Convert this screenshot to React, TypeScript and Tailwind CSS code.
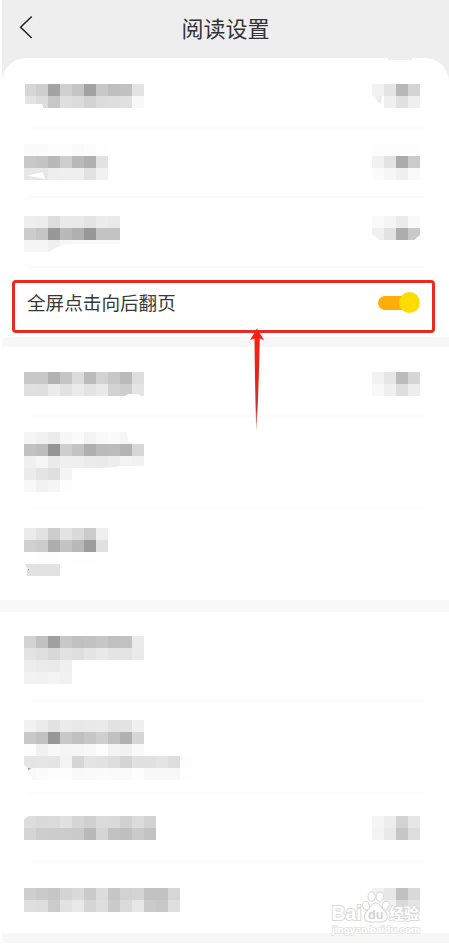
import type { ReactNode } from "react";

const CJK = "font-['Noto_Sans_CJK_SC','Noto_Sans',sans-serif]";

/* Each string is one line of 12px tiles; every pair of hex digits is a grey level. */
type Tiles = string[];

function Mosaic({ lines, children }: { lines: Tiles; children?: ReactNode }) {
  return (
    <div className="relative flex flex-col">
      {lines.map((line, i) => (
        <div key={i} className="flex h-3">
          {(line.match(/../g) ?? []).map((g, j) => (
            <span key={j} className="size-3 shrink-0" style={{ backgroundColor: `#${g}${g}${g}` }} />
          ))}
        </div>
      ))}
      {children && (
        <svg className="absolute left-0 top-0 overflow-visible" width="1" height="1" fill="#fff" aria-hidden="true">
          {children}
        </svg>
      )}
    </div>
  );
}

function Row({ className, left, right }: { className: string; left: ReactNode; right?: ReactNode }) {
  return (
    <div className={`flex shrink-0 items-start justify-between pl-[22px] pr-[29px] ${className}`}>
      {left}
      {right}
    </div>
  );
}

function Divider({ className = "bg-[#fbfbfb]" }: { className?: string }) {
  return <div className={`ml-[26px] mr-[23px] h-[2px] shrink-0 ${className}`} />;
}

function Toggle() {
  return (
    <div className="flex h-[21px] w-[42px] items-center">
      <div className="flex h-[14px] w-9 items-center rounded-full bg-[#ffad0a]">
        <div className="ml-[21px] size-[21px] shrink-0 rounded-full bg-[#ffdc00]" />
      </div>
    </div>
  );
}

function Watermark() {
  return (
    <svg className="absolute left-[328px] top-[886px]" width="100" height="52" viewBox="0 0 100 52" aria-hidden="true">
      <g fill="#fff" stroke="#dadada" strokeWidth="1.1" strokeLinejoin="round">
        <text x="3.5" y="33.5" fontSize="20" strokeWidth="2" paintOrder="stroke" textLength="30" lengthAdjust="spacingAndGlyphs" className="font-['Liberation_Sans',sans-serif] font-bold">Bai</text>
        <ellipse cx="38" cy="19.7" rx="3.3" ry="4.5" transform="rotate(-18 38 19.7)" />
        <ellipse cx="43.6" cy="10.6" rx="3.6" ry="4.7" />
        <ellipse cx="51.8" cy="10.8" rx="3.6" ry="4.7" transform="rotate(8 51.8 10.8)" />
        <ellipse cx="57.6" cy="19.4" rx="3.3" ry="4.5" transform="rotate(18 57.6 19.4)" />
        <path d="M47.5 17c-4 0-5 4.3-7.7 7C37 26.7 35.3 31 37.4 34.2c2.4 3.2 6.4 1.6 10.4 1.6s8 1.6 10.4-1.6c2.2-3.2.6-7.5-2.2-10.2-2.7-2.7-4.3-7-8.5-7Z" />
        <text x="40" y="32.5" fontSize="12.5" stroke="none" fill="#d2d2d2" className="font-['Liberation_Sans',sans-serif] font-bold">du</text>
        <text x="61" y="33" fontSize="15" strokeWidth="1.8" paintOrder="stroke" className={`${CJK} font-bold`}>经验</text>
      </g>
      <text x="4" y="46.5" fontSize="9.5" textLength="88" lengthAdjust="spacingAndGlyphs" fill="#fff" stroke="#e6e6e6" strokeWidth="1.8" strokeLinejoin="round" paintOrder="stroke" className="font-['Liberation_Sans',sans-serif] font-bold">
        jingyan.baidu.com
      </text>
    </svg>
  );
}

export default function App() {
  return (
    <div className="relative h-[946px] w-[449px] overflow-hidden bg-white">
      <main className="flex h-full flex-col pl-[2px]">
        <div className="shrink-0 bg-[#eeeeee]">
          <header className="grid h-[58px] grid-cols-[60px_1fr_60px]">
            <svg className="ml-[17px] mt-[15px]" width="15" height="24" viewBox="0 0 15 24" fill="none" stroke="#222" strokeWidth="1.5" aria-label="返回">
              <path d="M12.7 1.5 1.6 12.2 12.7 23" />
            </svg>
            <h1 className={`text-center text-[22px] leading-[54px] text-[#333] ${CJK}`}>阅读设置</h1>
          </header>
          <section className="flex h-[279px] flex-col rounded-t-[24px] bg-white">
            <Row
              className="h-[69px] pt-[26px]"
              left={
                <Mosaic lines={["d6cea3d0c5a2c8bfc1e3", "e4dcc7dfdcd2dcdde1f8"]}>
                  <path d="M0 0h1v24H0zM0 20h18v1h1v3H0z" />
                </Mosaic>
              }
              right={
                <Mosaic lines={["f2e5b8d4", "fff0e1ef"]}>
                  <path d="M3 12h7l-1 8-4-3z" fill="#ececec" />
                </Mosaic>
              }
            />
            <Divider />
            <Row
              className="h-[67px] pt-[15px]"
              left={
                <Mosaic lines={["fbfbfdfdfafcfe", "c8c4b9ceb9b0e2", "e7e7eeefefe2f1"]}>
                  <path d="M3 31.5 19 28l2 7-10-2z" />
                </Mosaic>
              }
              right={
                <Mosaic lines={["fdfdfdfd", "f1e3aacb", "fbf6f0fa"]}>
                  <path d="M0 33v3h4z" />
                </Mosaic>
              }
            />
            <Divider />
            <Row
              className="h-[68px] pt-[18px]"
              left={
                <Mosaic lines={["eeeddde9e9e4ecea", "ccc598b9b098c3c3", "f5f5eff6f8f9fafa"]}>
                  <path d="M25 36q8-7 24-8h47v8z" />
                </Mosaic>
              }
              right={
                <Mosaic lines={["faf5ebf9", "f0e2adc9"]}>
                  <path d="M0 18v6h8zM48 19v5h-6z" />
                </Mosaic>
              }
            />
            <Divider />
            <div className="ml-[10px] mr-[14px] mt-[12px] flex h-[53px] shrink-0 justify-between rounded-[4px] border-[3px] border-[#ea2a22] pl-[12px] pr-[12px]">
              <span className={`text-[18.6px] leading-[37px] text-[#383838] ${CJK}`}>全屏点击向后翻页</span>
              <div className="pt-[9px]">
                <Toggle />
              </div>
            </div>
          </section>
        </div>
        <div className="h-[10px] shrink-0 bg-[#f7f7f7]" />
        <section className="flex h-[253px] shrink-0 flex-col">
          <Row
            className="h-[68px] pt-[25px]"
            left={
              <Mosaic lines={["c8c8b2c5dcbbd2c7badd", "e0dfebe2ebe3e9d3cde5"]}>
                <path d="m101 24 3-2h10l3 2z" />
              </Mosaic>
            }
            right={<Mosaic lines={["f2e6bbd6", "f8efdeed"]} />}
          />
          <Divider />
          <Row
            className="h-[90px] pt-[15px]"
            left={
              <Mosaic lines={["f5f1ebf7fbf3f9fbf5ff", "c1bd94cec4afbbbcb4d7", "f0f6eaefefeceaedf3f1", "ece4dff4", "f8f2f5fd"]}>
                <path d="M103 0h5v10h-4zM74 36l20-1v-1h26v2z" />
              </Mosaic>
            }
          />
          <Divider className="bg-[#fcfcfc]" />
          <Row
            className="h-[91px] pt-[19px]"
            left={
              <Mosaic lines={["ebe2cde3dacbef", "d0ccaec4b99de1", "fefdfdfefefeff", "e2e2e2fe"]}>
                <path d="M0 36h1l2 4v8H0z" />
                <path d="M4 41h1v1H4z" fill="#888" />
              </Mosaic>
            }
          />
        </section>
        <div className="-ml-[2px] h-3 shrink-0 bg-[#f8f8f8]" />
        <section className="flex h-[321px] shrink-0 flex-col">
          <Row
            className="h-[88px] pt-6"
            left={<Mosaic lines={["d2c1a0c7c0c2c6c0c2eb", "e3dfd8e2dfe5e9e4e4ea", "edebeaf0", "f2f1f3f1"]} />}
          />
          <Divider className="bg-[#fcfcfc]" />
          <Row
            className="h-[90px] pt-[18px]"
            left={
              <Mosaic
                lines={[
                  "f1ebe2ebe8e9eae2e3f0",
                  "c8c298c8c0c6cfc1b0d6",
                  "fdf1f8f5f6f8fdf3f1f9",
                  "e5e6e5f3d6e4e2ddd4e1e1e4ddfd",
                  "f9fbfdfdf9fafbfafafdf8f8f8fe",
                ]}
              >
                <path d="M0 45v15h9l-5-7v-5z" />
                <path d="M4 48h3l-2 2H4z" fill="#aaa" />
              </Mosaic>
            }
          />
          <Divider className="bg-[#fcfcfc]" />
          <Row
            className="h-[67px] pt-[22px]"
            left={
              <Mosaic lines={["dddadbe1d6d0dbdad1dcd2", "d5cdcccccab9d5c2bfcac3"]}>
                <path d="M0 0h5l-2 1-1 1-2 1z" />
              </Mosaic>
            }
            right={<Mosaic lines={["f5edd2e6", "f3e9c6dd"]} />}
          />
          <Divider className="bg-[#fdfdfd]" />
          <Row
            className="h-[70px] pt-[25px]"
            left={<Mosaic lines={["cfcac6d4dacadcc6d2d4c2c2d7", "dfdecbe2e8d6decadbe7cac7df"]} />}
            right={<Mosaic lines={["f1e7c1d9", "f9f0d9e5"]} />}
          />
        </section>
        <div className="h-[10px] shrink-0 bg-[#f7f7f7]" />
      </main>

      <div className="absolute left-[388px] top-[58px] h-[2px] w-6 bg-[#f0f0f0]" />
      <svg className="absolute left-[250px] top-[328px]" width="15" height="106" viewBox="0 0 15 106" aria-hidden="true">
        <defs>
          <linearGradient id="arrow" x1="0" y1="0" x2="0" y2="1">
            <stop offset="0" stopColor="#fb200f" />
            <stop offset=".5" stopColor="#e4241b" />
            <stop offset=".78" stopColor="#b83c38" />
            <stop offset="1" stopColor="#d8b0b0" />
          </linearGradient>
        </defs>
        <path d="M7 .5 14 12 9.8 10.5Q8.6 66 6.4 104 5 66 4.5 10.5L0 12Z" fill="url(#arrow)" />
      </svg>
      <Watermark />
    </div>
  );
}
